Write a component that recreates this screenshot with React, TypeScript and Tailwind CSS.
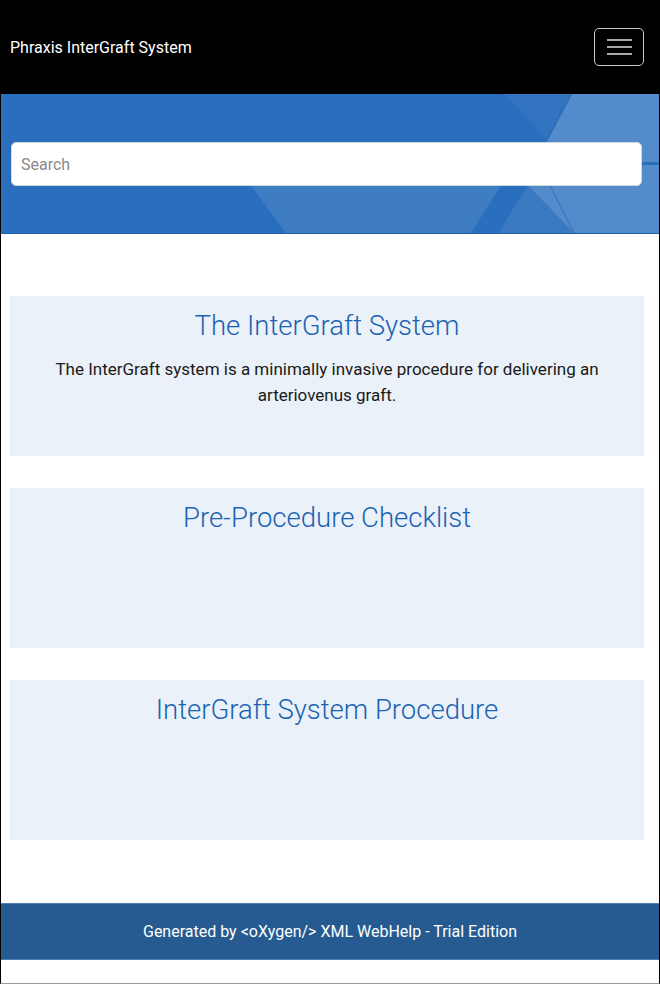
import React from "react";

const cards = [
	{
		title: "The InterGraft System",
		text: "The InterGraft system is a minimally invasive procedure for delivering an arteriovenus graft.",
	},
	{ title: "Pre-Procedure Checklist", text: "" },
	{ title: "InterGraft System Procedure", text: "" },
];

const BannerShapes = () => (
	<svg
		className="absolute inset-0 h-full w-full"
		viewBox="0 0 658 140"
		preserveAspectRatio="none"
	>
		<polygon points="0,0 658,0 658,140 0,140" fill="#2a6fbd" />
		<polygon points="250,92 500,92 470,140 285,140" fill="#ffffff" fillOpacity="0.1" />
		<polygon points="503,0 570,0 547,46" fill="#ffffff" fillOpacity="0.04" />
		<polygon points="570,0 658,0 658,140 573,140 527,92 547,46" fill="#ffffff" fillOpacity="0.2" />
		<polygon points="527,92 573,140 497,140" fill="#ffffff" fillOpacity="0.08" />
		<line x1="570" y1="0" x2="497" y2="140" stroke="#2a6fbd" strokeWidth="2" />
		<line x1="503" y1="0" x2="573" y2="140" stroke="#2a6fbd" strokeWidth="1.5" strokeOpacity="0.6" />
		<line x1="641" y1="70" x2="658" y2="70" stroke="#2a6fbd" strokeWidth="3" />
	</svg>
);

export default function App() {
	return (
		<div
			className="flex h-[984px] w-[660px] flex-col border-x border-b border-x-black border-b-[#9a9a9a] bg-white"
			style={{ fontFamily: "Roboto, 'Liberation Sans', sans-serif" }}
		>
			<header className="flex h-[94px] shrink-0 items-center justify-between bg-black pl-[9px] pr-[15px]">
				<span className="pt-[1px] text-[16px] text-white">Phraxis InterGraft System</span>
				<button className="flex h-[38px] w-[50px] flex-col items-center justify-center gap-[5px] rounded-[5px] border border-[#c8c8c8]">
					<span className="h-[2px] w-[25px] bg-[#a8a8a8]" />
					<span className="h-[2px] w-[25px] bg-[#a8a8a8]" />
					<span className="h-[2px] w-[25px] bg-[#a8a8a8]" />
				</button>
			</header>

			<section className="relative h-[140px] shrink-0 overflow-hidden border-b border-[#1f5fa8]">
				<BannerShapes />
				<div className="relative pl-[10px] pr-[17px] pt-[48px]">
					<input
						className="h-[44px] w-full rounded-[5px] border border-[#cfd6de] bg-white px-[9px] text-[16px] text-gray-700 placeholder:text-[#8a8a8a] outline-none"
						placeholder="Search"
					/>
				</div>
			</section>

			<main className="flex flex-col gap-[32px] pl-[9px] pr-[15px] pt-[62px]">
				{cards.map((c) => (
					<div key={c.title} className="h-[160px] bg-[#eaf1f8] px-[30px] pt-[13px] text-center">
						<h2 className="text-[27.5px] leading-[34px] font-light text-[#1a63b4]">{c.title}</h2>
						{c.text && (
							<p className="mt-[13px] text-[17px] leading-[26px] text-[#1a1a1a]">{c.text}</p>
						)}
					</div>
				))}
			</main>

			<footer className="mt-[63px] flex h-[57px] shrink-0 items-center justify-center border-y border-[#4f7fb0] bg-[#255b91]">
				<span className="text-[16px] text-white">Generated by &lt;oXygen/&gt; XML WebHelp - Trial Edition</span>
			</footer>
		</div>
	);
}
